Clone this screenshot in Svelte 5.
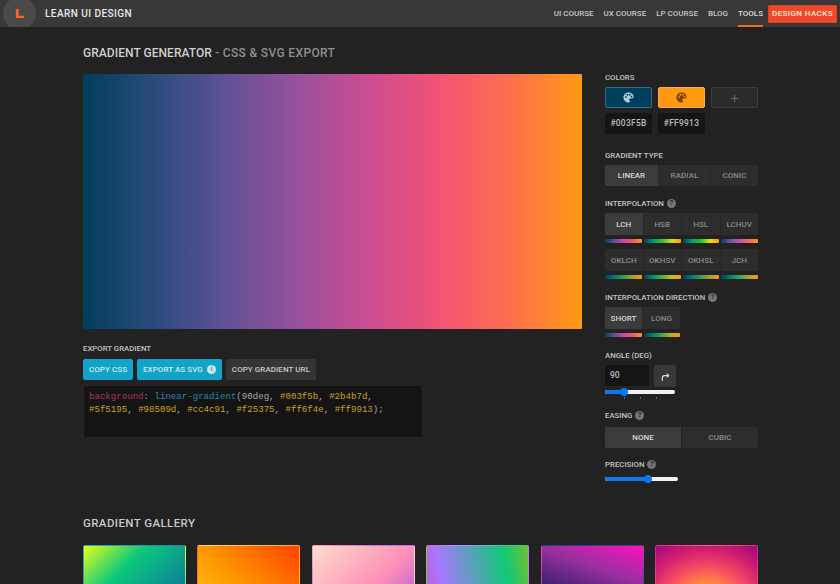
<script>
  const stops = ['#003f5b', '#2b4b7d', '#5f5195', '#98509d', '#cc4c91', '#f25375', '#ff6f4e', '#ff9913']
  const main = `linear-gradient(90deg, ${stops.join(', ')})`

  const nav = ['UI COURSE', 'UX COURSE', 'LP COURSE', 'BLOG', 'TOOLS']

  const lch = 'linear-gradient(90deg, #003f5b, #5f5195, #cc4c91, #f25375, #ff9913)'
  const hsb = 'linear-gradient(90deg, #003f5b, #00997a, #3fc030, #d8d820, #ff9913)'
  const hsl = 'linear-gradient(90deg, #003f5b, #00a070, #20c030, #e8e800, #ff9913)'
  const ok = 'linear-gradient(90deg, #003f5b, #007a78, #3c9a50, #a0a030, #ff9913)'

  const row1 = [
    { name: 'LCH', bar: lch, active: true },
    { name: 'HSB', bar: hsb },
    { name: 'HSL', bar: hsl },
    { name: 'LCHUV', bar: 'linear-gradient(90deg, #003f5b, #6a55a5, #c058a8, #f06a70, #ff9913)' }
  ]
  const row2 = [
    { name: 'OKLCH', bar: ok },
    { name: 'OKHSV', bar: 'linear-gradient(90deg, #003f5b, #009080, #50b040, #c8c020, #ff9913)' },
    { name: 'OKHSL', bar: ok },
    { name: 'JCH', bar: 'linear-gradient(90deg, #003f5b, #008070, #40a060, #a8a830, #ff9913)' }
  ]
  const direction = [
    { name: 'SHORT', bar: lch, active: true },
    { name: 'LONG', bar: 'linear-gradient(90deg, #003f5b, #008078, #40a840, #b8b020, #ff9913)' }
  ]

  const gallery = [
    'linear-gradient(135deg, #e8ff1a, #0cc97c 30%, #0b7f9a 70%, #0b6f9a)',
    'linear-gradient(45deg, #ffd820, #ff9a00 50%, #ff4400)',
    'linear-gradient(135deg, #ffdcc8, #ff90b8 50%, #b45cd8 80%)',
    'linear-gradient(80deg, #d050c0, #a878ff 22%, #10c878 78%, #70c030)',
    'linear-gradient(20deg, #1a1660, #3a2070 45%, #9a30a0 73%, #ff10c0)',
    'radial-gradient(ellipse 75px 66px at 50% 58%, #ffa030 25%, #f85060 55%, #d01c70 85%, #a00880 110%)'
  ]
</script>

{#snippet palette(color)}
  <svg class="palette" viewBox="0 0 24 24" fill={color}>
    <path fill-rule="evenodd" d="M12 1C5.6 1 1 5.8 1 12s5 11 11 11c2 0 3-1.300 3-2.800 0-1.700-1.400-2.200-1.400-3.700 0-1.300 1-2.200 2.400-2.200h3C21.400 14.300 23 13 23 10.500 23 5 18 1 12 1zM6.500 13a2 2 0 1 1 0-4 2 2 0 0 1 0 4zM9.500 8a2 2 0 1 1 0-4 2 2 0 0 1 0 4zM15 8a2 2 0 1 1 0-4 2 2 0 0 1 0 4zM18.500 12a2 2 0 1 1 0-4 2 2 0 0 1 0 4z" />
  </svg>
{/snippet}

{#snippet help()}
  <span class="help">?</span>
{/snippet}

{#snippet bars(items)}
  <div class="seg tall">
    {#each items as item}
      <button class="seg-item" class:active={item.active} type="button">{item.name}</button>
    {/each}
  </div>
  <div class="bars">
    {#each items as item}
      <i style={`background: ${item.bar}`}></i>
    {/each}
  </div>
{/snippet}

<header class="top">
  <div class="brand">
    <span class="logo">
      <svg viewBox="0 0 12 12" width="11" height="11">
        <path d="M2 1h3v7.500h6V11H2z" fill="#f26a21" />
      </svg>
    </span>
    <span class="brand-name">LEARN UI DESIGN</span>
  </div>
  <nav>
    {#each nav as link}
      <a href="#top" class:current={link === 'TOOLS'}>{link}</a>
    {/each}
    <a href="#top" class="hacks">DESIGN HACKS</a>
  </nav>
</header>

<main>
  <h1>GRADIENT GENERATOR <span>- CSS &amp; SVG EXPORT</span></h1>

  <div class="tool">
    <section class="left">
      <div class="preview" style={`background: ${main}`}></div>

      <div class="label export-label">EXPORT GRADIENT</div>
      <div class="actions">
        <button class="btn blue" type="button">COPY CSS</button>
        <button class="btn blue" type="button">EXPORT AS SVG <span class="info">i</span></button>
        <button class="btn" type="button">COPY GRADIENT URL</button>
      </div>
      <pre class="code"><span class="prop">background</span>: <span class="fn">linear-gradient</span>(90deg, <span class="hex">#003f5b</span>, <span class="hex">#2b4b7d</span>,
<span class="hex">#5f5195</span>, <span class="hex">#98509d</span>, <span class="hex">#cc4c91</span>, <span class="hex">#f25375</span>, <span class="hex">#ff6f4e</span>, <span class="hex">#ff9913</span>);</pre>
    </section>

    <aside class="right">
      <div class="label">COLORS</div>
      <div class="swatches">
        <button class="swatch navy" type="button">{@render palette('#a9cfe0')}</button>
        <button class="swatch amber" type="button">{@render palette('#7a4300')}</button>
        <button class="swatch add" type="button">+</button>
      </div>
      <div class="hexes">
        <span>#003F5B</span>
        <span>#FF9913</span>
      </div>

      <div class="label type-label">GRADIENT TYPE</div>
      <div class="seg type">
        <button class="seg-item active" type="button">LINEAR</button>
        <button class="seg-item" type="button">RADIAL</button>
        <button class="seg-item" type="button">CONIC</button>
      </div>

      <div class="label mid">INTERPOLATION {@render help()}</div>
      {@render bars(row1)}
      <div class="row2">{@render bars(row2)}</div>

      <div class="label mid dir-label">INTERPOLATION DIRECTION {@render help()}</div>
      <div class="direction">{@render bars(direction)}</div>

      <div class="label mid angle-label">ANGLE (DEG)</div>
      <div class="angle">
        <span class="angle-input">90</span>
        <button class="rotate" type="button" aria-label="rotate">
          <svg viewBox="0 0 12 12" width="11" height="11" fill="none" stroke="#ddd" stroke-width="1.300">
            <path d="M2.500 10.500V7.500C2.500 5.800 3.500 5 5 5h4.500" />
            <path d="M7.500 2.300 10.300 5 7.500 7.700z" fill="#ddd" stroke="none" />
          </svg>
        </button>
      </div>
      <div class="slider angle-slider">
        <div class="fill" style="width: 19px"></div>
        <div class="thumb" style="left: 15px"></div>
      </div>
      <div class="ticks"><i></i><i></i><i></i></div>

      <div class="label easing-label">EASING {@render help()}</div>
      <div class="seg easing">
        <button class="seg-item active" type="button">NONE</button>
        <button class="seg-item" type="button">CUBIC</button>
      </div>

      <div class="label precision-label">PRECISION {@render help()}</div>
      <div class="slider precision-slider">
        <div class="fill" style="width: 44px"></div>
        <div class="thumb" style="left: 39px"></div>
      </div>
    </aside>
  </div>

  <h2>GRADIENT GALLERY</h2>
  <div class="gallery">
    {#each gallery as bg}
      <div class="card" style={`background: ${bg}`}></div>
    {/each}
  </div>
</main>

<style>
  :global(body) {
    background: #222;
    overflow: hidden;
    font-family: Roboto, "Liberation Sans", sans-serif;
    color: #ccc;
  }

  .top {
    height: 27px;
    background: #383838;
    display: flex;
    justify-content: space-between;
    align-items: center;
    overflow: hidden;
  }

  .brand {
    display: flex;
    align-items: center;
    margin-left: 3px;
  }

  .logo {
    width: 33px;
    height: 33px;
    border-radius: 50%;
    background: #4a4a4a;
    display: flex;
    align-items: center;
    justify-content: center;
    box-sizing: border-box;
  }

  .brand-name {
    margin-left: 9px;
    font-size: 10px;
    font-weight: 500;
    letter-spacing: 0.45px;
    color: #e6e6e6;
  }

  nav {
    display: flex;
    align-items: center;
    height: 27px;
    gap: 10px;
    margin-right: 3px;
  }

  nav a {
    color: #c6c6c6;
    text-decoration: none;
    font-size: 8px;
    font-weight: 500;
    letter-spacing: 0;
    line-height: 27px;
    height: 27px;
    box-sizing: border-box;
  }

  nav a.current {
    border-bottom: 2px solid #f26a21;
    color: #ddd;
  }

  nav a.hacks {
    background: #f0492a;
    color: #ffe9dc;
    height: 18px;
    line-height: 16px;
    width: 69px;
    text-align: center;
    border: 1px solid #d9432a;
    margin-left: -5px;
    letter-spacing: 0.4px;
    border-radius: 1px;
  }

  main {
    padding: 0 82px 0 83px;
  }

  h1 {
    margin: 0;
    padding-top: 19px;
    font-size: 12px;
    line-height: 14px;
    font-weight: 500;
    letter-spacing: 0.05px;
    color: #cfcfcf;
  }

  h1 span {
    color: #8e8e8e;
    font-weight: 500;
    letter-spacing: 0.35px;
  }

  .tool {
    display: flex;
    justify-content: space-between;
    margin-top: 14px;
  }

  .left {
    width: 499px;
  }

  .preview {
    height: 255px;
    border-radius: 1px;
  }

  .label {
    font-size: 7.8px;
    line-height: 10px;
    font-weight: 500;
    color: #c2c2c2;
    display: flex;
    align-items: center;
    gap: 3px;
    padding-top: 1px;
    margin-bottom: -1px;
  }

  .export-label {
    margin-top: 14px;
  }

  .actions {
    display: flex;
    gap: 4px;
    margin-top: 6px;
  }

  .btn {
    height: 21px;
    padding: 0 6px;
    border: 0;
    border-radius: 2px;
    background: #353535;
    color: #c8c8c8;
    font: 500 8px Roboto, sans-serif;
    letter-spacing: 0.05px;
    display: flex;
    align-items: center;
    gap: 4px;
  }

  .btn.blue {
    background: #12a3c9;
    color: #cdeaf2;
  }

  .info {
    width: 9px;
    height: 9px;
    border-radius: 50%;
    background: #cfe6ee;
    color: #12a3c9;
    font-size: 7px;
    font-weight: 700;
    line-height: 9px;
    text-align: center;
    letter-spacing: 0;
  }

  .code {
    margin: 5px 0 0;
    width: 340px;
    height: 53px;
    box-sizing: border-box;
    padding: 4px 5px;
    background: #141414;
    border: 1px solid #262626;
    border-radius: 2px;
    font: 9.1px/13px "Liberation Mono", monospace;
    color: #a8a8a8;
  }

  .prop {
    color: #b0306a;
  }

  .fn {
    color: #2a85ab;
  }

  .hex {
    color: #c9a227;
  }

  .right {
    width: 153px;
    margin-top: -2px;
  }

  .swatches {
    display: flex;
    justify-content: space-between;
    margin-top: 5px;
  }

  .swatch {
    width: 47px;
    height: 21px;
    padding: 0;
    border-radius: 2px;
    border: 1px solid transparent;
    display: flex;
    align-items: center;
    justify-content: center;
  }

  .navy {
    background: #003f5b;
    border-color: #2d6f8d;
  }

  .amber {
    background: #ff9913;
    border-color: #ffab42;
  }

  .add {
    background: #2b2b2b;
    border-color: #3c3c3c;
    color: #6a6a6a;
    font-size: 14px;
    font-weight: 400;
  }

  .palette {
    width: 11px;
    height: 11px;
  }

  .hexes {
    display: flex;
    gap: 6px;
    margin-top: 5px;
  }

  .hexes span {
    width: 47px;
    height: 21px;
    background: #151515;
    border-radius: 2px;
    font-size: 8.4px;
    font-weight: 500;
    letter-spacing: 0.3px;
    line-height: 21px;
    text-align: center;
    color: #bdbdbd;
  }

  .type-label {
    margin-top: 16px;
  }

  .seg {
    display: flex;
    margin-top: 5px;
    height: 21px;
    border-radius: 2px;
    overflow: hidden;
    background: #2d2d2d;
  }

  .seg.tall {
    height: 22px;
  }

  .seg.type {
    display: grid;
    grid-template-columns: 53px 52px 48px;
  }

  .seg-item {
    flex: 1 1 0;
    min-width: 0;
    padding: 0;
    border: 0;
    border-left: 1px solid #262626;
    background: transparent;
    color: #8a8a8a;
    font: 500 8px Roboto, sans-serif;
    letter-spacing: 0.05px;
  }

  .seg-item:first-child {
    border-left: 0;
  }

  .seg-item.active {
    background: #3c3c3c;
    color: #d8d8d8;
  }

  .mid {
    margin-top: 12px;
  }

  .help {
    width: 9px;
    height: 9px;
    border-radius: 50%;
    background: #757575;
    color: #262626;
    font-size: 7px;
    font-weight: 700;
    line-height: 9px;
    text-align: center;
    margin-top: -2px;
  }

  .bars {
    display: flex;
    gap: 2px;
    margin-top: 4px;
  }

  .bars i {
    flex: 1 1 0;
    height: 4px;
    border-radius: 1px;
  }

  .row2 {
    margin-top: 6px;
  }

  .dir-label {
    margin-top: 13px;
  }

  .direction {
    width: 75px;
  }

  .angle-label {
    margin-top: 13px;
  }

  .angle {
    display: flex;
    gap: 5px;
    margin-top: 5px;
  }

  .angle-input {
    width: 44px;
    height: 21px;
    box-sizing: border-box;
    padding-left: 5px;
    background: #151515;
    border-radius: 2px;
    font-size: 8.5px;
    font-weight: 500;
    line-height: 21px;
    color: #bdbdbd;
  }

  .rotate {
    width: 22px;
    height: 22px;
    padding: 0;
    border: 0;
    border-radius: 2px;
    background: #383838;
    display: flex;
    align-items: center;
    justify-content: center;
  }

  .slider {
    position: relative;
    height: 4px;
    background: #f2f2f2;
    border-radius: 2px;
  }

  .fill {
    height: 100%;
    background: #0a78f0;
    border-radius: 2px;
  }

  .thumb {
    position: absolute;
    top: -2px;
    width: 8px;
    height: 8px;
    background: #0a78f0;
    border-radius: 50%;
  }

  .angle-slider {
    width: 70px;
    margin-top: 3px;
  }

  .ticks {
    display: flex;
    gap: 15px;
    margin: 3px 0 0 19px;
    height: 2px;
  }

  .ticks i {
    width: 1px;
    height: 2px;
    background: #666;
  }

  .easing-label {
    margin-top: 11px;
  }

  .easing {
    margin-top: 7px;
  }

  .precision-label {
    margin-top: 11px;
  }

  .precision-slider {
    width: 73px;
    margin-top: 8px;
  }

  h2 {
    margin: 0;
    padding-top: 35px;
    font-size: 11.5px;
    line-height: 14px;
    font-weight: 500;
    letter-spacing: 0.4px;
    color: #c8c8c8;
  }

  .gallery {
    display: grid;
    grid-template-columns: repeat(6, 103px);
    justify-content: space-between;
    margin-top: 15px;
  }

  .card {
    height: 103px;
    border-radius: 2px;
    box-sizing: border-box;
    border: 1px solid rgba(255, 255, 255, 0.15);
  }
</style>
